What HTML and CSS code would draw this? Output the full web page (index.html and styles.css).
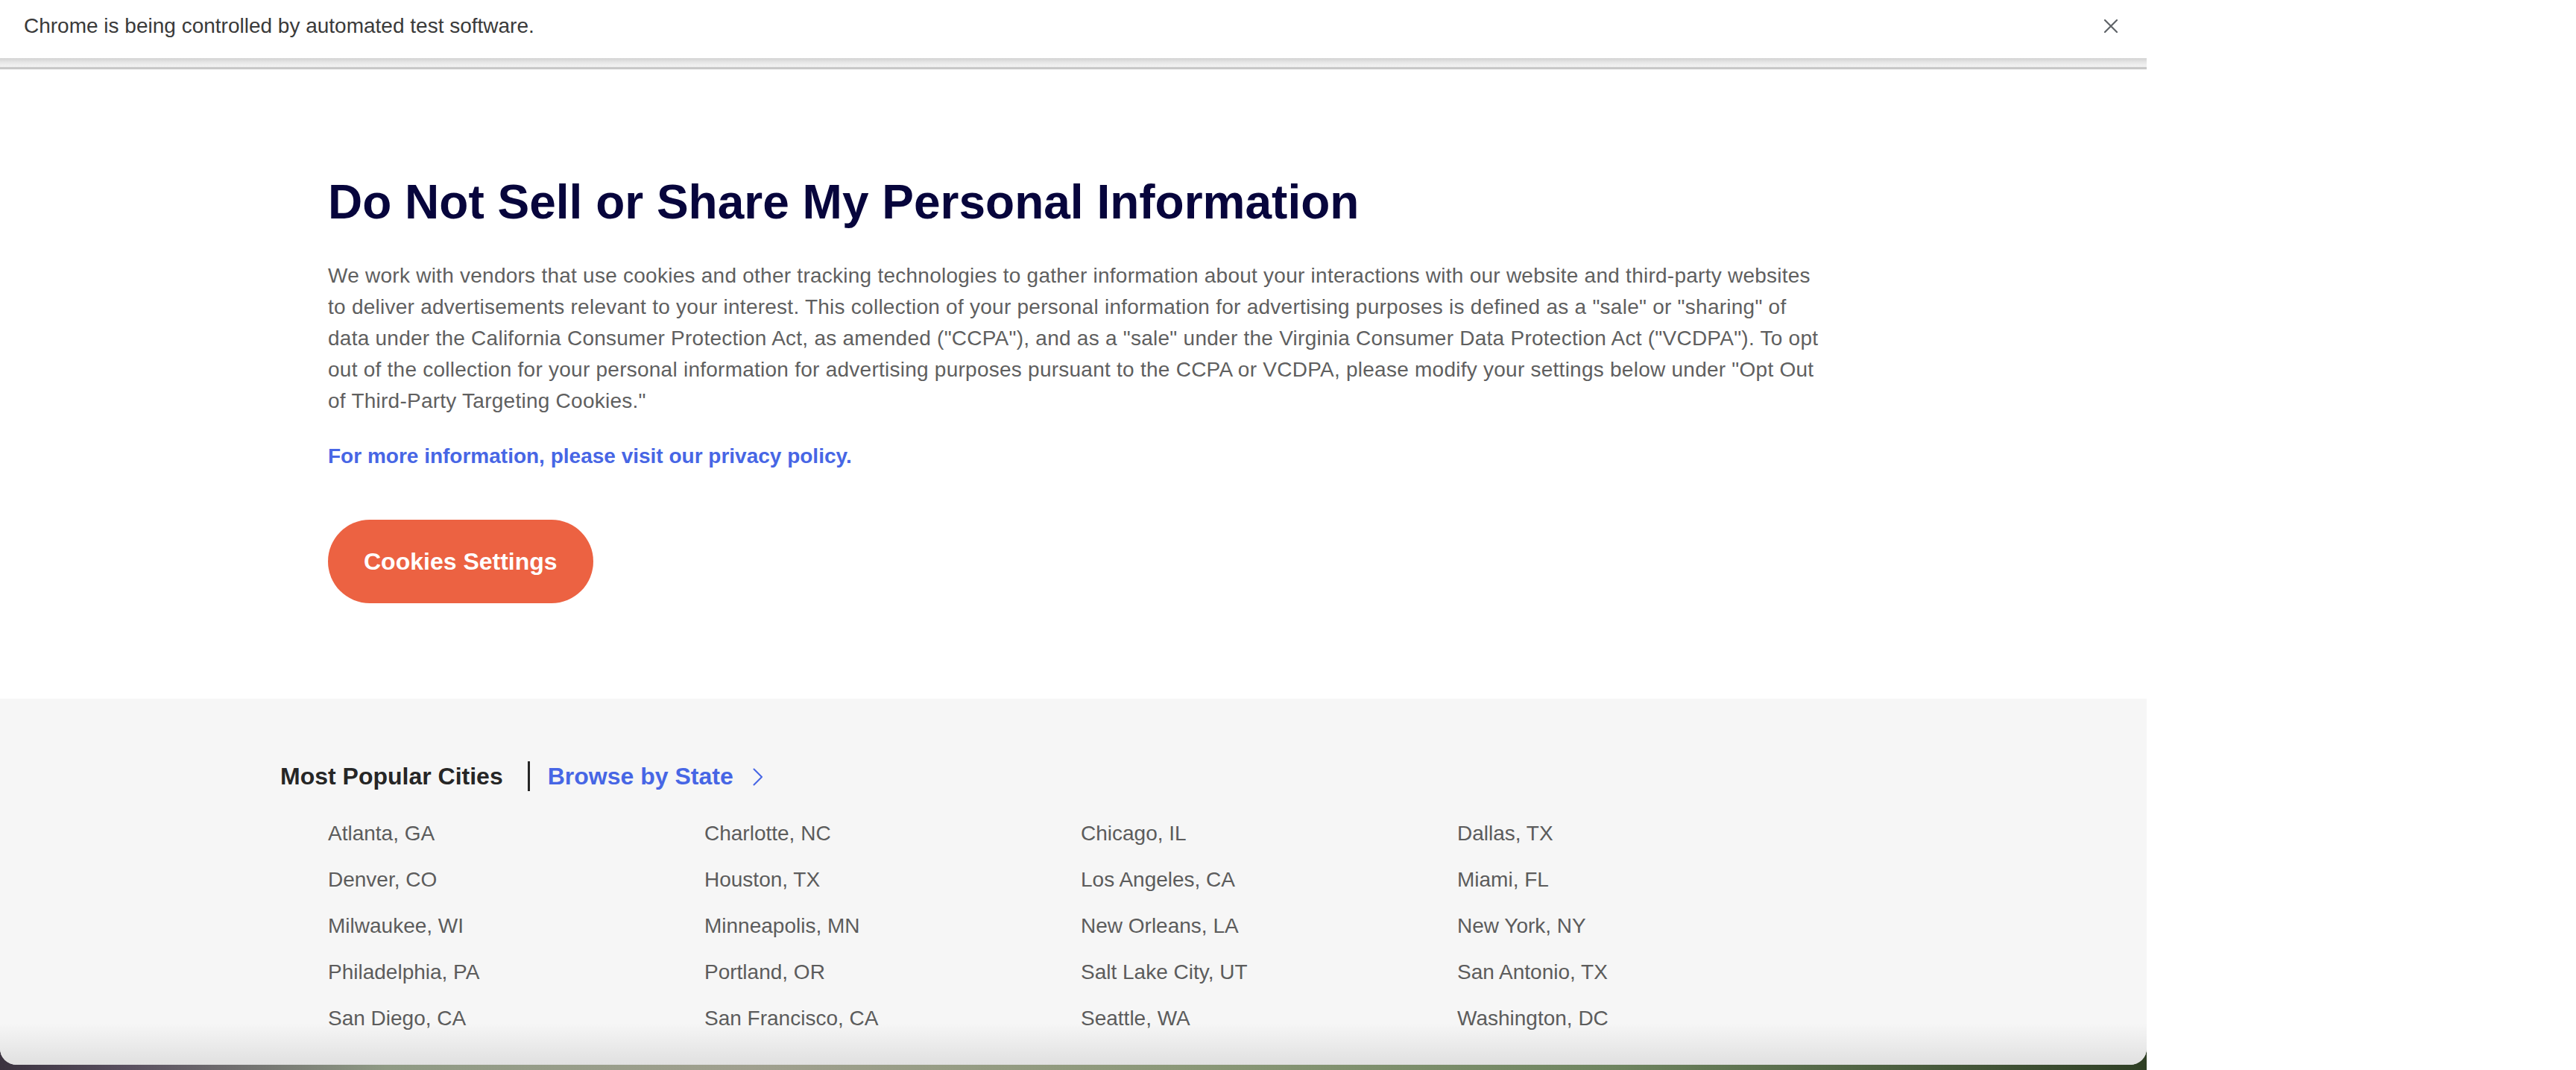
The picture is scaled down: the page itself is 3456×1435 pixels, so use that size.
FILE: index.html
```html
<!DOCTYPE html>
<html lang="en">
<head>
<meta charset="utf-8">
<title>Do Not Sell or Share My Personal Information</title>
<link rel="stylesheet" href="styles.css">
</head>
<body>
<div class="screen">
  <div class="window">
    <div class="infobar">
      <span class="infobar-text">Chrome is being controlled by automated test software.</span>
      <span class="infobar-close" aria-label="Close">
        <svg width="18" height="18" viewBox="0 0 18 18"><path d="M1 1 L17 17 M17 1 L1 17" stroke="#5f6368" stroke-width="2.2" fill="none" stroke-linecap="round"/></svg>
      </span>
    </div>
    <div class="infobar-shadow"></div>

    <main class="content">
      <div class="content-inner">
        <h1 class="title">Do Not Sell or Share My Personal Information</h1>
        <p class="intro">We work with vendors that use cookies and other tracking technologies to gather information about your interactions with our website and third-party websites to deliver advertisements relevant to your interest. This collection of your personal information for advertising purposes is defined as a "sale" or "sharing" of data under the California Consumer Protection Act, as amended ("CCPA"), and as a "sale" under the Virginia Consumer Data Protection Act ("VCDPA"). To opt out of the collection for your personal information for advertising purposes pursuant to the CCPA or VCDPA, please modify your settings below under "Opt Out of Third-Party Targeting Cookies."</p>
        <a class="policy" href="#">For more information, please visit our privacy policy.</a>
        <button class="cookies-btn" type="button">Cookies Settings</button>
      </div>
    </main>

    <section class="cities">
      <div class="cities-inner">
        <div class="cities-head">
          <h2 class="cities-title">Most Popular Cities</h2>
          <span class="cities-divider"></span>
          <a class="browse" href="#">Browse by State</a>
          <svg class="chevron" width="14" height="24" viewBox="0 0 14 24"><path d="M1.5 1.5 L12 12 L1.5 22.5" stroke="#4766e5" stroke-width="2" fill="none" stroke-linecap="round" stroke-linejoin="round"/></svg>
        </div>
        <ul class="city-grid">
          <li>Atlanta, GA</li>
          <li>Charlotte, NC</li>
          <li>Chicago, IL</li>
          <li>Dallas, TX</li>
          <li>Denver, CO</li>
          <li>Houston, TX</li>
          <li>Los Angeles, CA</li>
          <li>Miami, FL</li>
          <li>Milwaukee, WI</li>
          <li>Minneapolis, MN</li>
          <li>New Orleans, LA</li>
          <li>New York, NY</li>
          <li>Philadelphia, PA</li>
          <li>Portland, OR</li>
          <li>Salt Lake City, UT</li>
          <li>San Antonio, TX</li>
          <li>San Diego, CA</li>
          <li>San Francisco, CA</li>
          <li>Seattle, WA</li>
          <li>Washington, DC</li>
        </ul>
      </div>
    </section>
  </div>
</div>
</body>
</html>
```

FILE: styles.css
```css
html, body {
  margin: 0;
  padding: 0;
  background: #ffffff;
}

body {
  width: 3456px;
  height: 1435px;
  overflow: hidden;
  font-family: "Liberation Sans", Arial, Helvetica, sans-serif;
}

.screen {
  width: 2880px;
  height: 1435px;
  background: linear-gradient(to right, #3b3340 0%, #5a5060 6%, #8f9a84 18%, #a0a08f 35%, #8b9878 55%, #6f8560 75%, #2f3f25 100%);
}

.window {
  width: 2880px;
  height: 1428px;
  display: flex;
  flex-direction: column;
  background: #ffffff;
  border-radius: 0 0 22px 22px;
  overflow: hidden;
}

/* Chrome automation infobar */
.infobar {
  height: 78px;
  display: flex;
  justify-content: space-between;
  align-items: flex-start;
  padding: 2px 39px 0 32px;
  box-sizing: border-box;
  background: #ffffff;
}

.infobar-text {
  font-size: 28px;
  line-height: 66px;
  color: #3a3a3a;
}

.infobar-close {
  height: 66px;
  display: flex;
  align-items: center;
}

.infobar-close svg {
  display: block;
}

.infobar-shadow {
  height: 12px;
  background: linear-gradient(to bottom, #d2d2d2 0%, #e4e4e4 40%, #f0f0f0 80%, #ededed 100%);
  border-bottom: 3px solid #c8c8c8;
  flex: none;
}

/* Main content */
.content {
  padding: 142px 0 128px;
  background: #ffffff;
}

.content-inner {
  width: 2000px;
  margin: 0 auto;
  display: flex;
  flex-direction: column;
  align-items: flex-start;
}

.title {
  margin: 0;
  font-size: 64px;
  line-height: 72px;
  font-weight: 700;
  color: #07053c;
}

.intro {
  margin: 42px 0 0;
  font-size: 28px;
  line-height: 42px;
  letter-spacing: 0.25px;
  color: #5f5f5f;
}

.policy {
  margin-top: 32px;
  font-size: 28px;
  line-height: 42px;
  font-weight: 700;
  color: #4766e5;
  text-decoration: none;
}

.cookies-btn {
  margin-top: 64px;
  height: 112px;
  padding: 0 48px;
  border: none;
  border-radius: 56px;
  background: #ec6242;
  color: #ffffff;
  font-family: "Liberation Sans", Arial, Helvetica, sans-serif;
  font-size: 32px;
  font-weight: 700;
}

/* Cities */
.cities {
  flex: 1;
  padding-top: 84px;
  background:
    linear-gradient(to bottom, rgba(0,0,0,0) 0%, rgba(0,0,0,0) calc(100% - 56px), rgba(0,0,0,0.09) 100%),
    #f6f6f6;
}

.cities-inner {
  width: 2128px;
  margin: 0 auto;
}

.cities-head {
  display: flex;
  align-items: center;
  height: 40px;
}

.cities-title {
  margin: 0;
  font-size: 32px;
  line-height: 40px;
  font-weight: 700;
  color: #262626;
}

.cities-divider {
  width: 3px;
  height: 40px;
  margin: 0 24px 0 33px;
  background: #262626;
}

.browse {
  font-size: 32px;
  line-height: 40px;
  font-weight: 700;
  color: #4766e5;
  text-decoration: none;
}

.chevron {
  margin-left: 26px;
  margin-top: 2px;
  display: block;
}

.city-grid {
  list-style: none;
  margin: 36px 0 0;
  padding: 0 0 0 64px;
  display: grid;
  grid-template-columns: repeat(4, 505px);
  row-gap: 20px;
}

.city-grid li {
  font-size: 28px;
  line-height: 42px;
  color: #5c5c5c;
}
```
